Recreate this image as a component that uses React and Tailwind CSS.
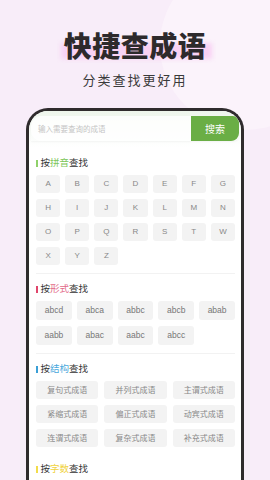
import React from 'react';

const letters = ['A','B','C','D','E','F','G','H','I','J','K','L','M','N','O','P','Q','R','S','T','W','X','Y','Z'];
const forms = ['abcd','abca','abbc','abcb','abab','aabb','abac','aabc','abcc'];
const structs = ['复句式成语','并列式成语','主谓式成语','紧缩式成语','偏正式成语','动宾式成语','连谓式成语','复杂式成语','补充式成语'];

const SectionTitle = ({ word, bar, color }) => (
    <div className="flex items-center h-[14px] text-[9.5px] text-[#333] leading-none">
        <span className={`w-[1.5px] h-[7px] mr-[3px] ${bar}`}></span>
        <span>按</span>
        <span className={color}>{word}</span>
        <span>查找</span>
    </div>
);

export default function App() {
    return (
        <div
            className="relative w-[270px] h-[480px] overflow-hidden bg-[#f8edf9]"
            style={{ fontFamily: '"Noto Sans CJK SC", "Noto Sans", sans-serif' }}
        >
            {/* soft background shapes */}
            <div className="absolute -right-[60px] -top-[40px] w-[170px] h-[170px] rounded-full bg-[#fbf3fb]"></div>

            <div className="relative flex flex-col items-center pt-[28px]">
                <div className="relative">
                    <div className="absolute left-[-3px] right-[-6px] top-[15px] h-[16px] bg-[#f8d2f4] blur-[2px]"></div>
                    <h1 className="relative text-[28px] leading-[34px] font-black text-[#2d2a2c] tracking-[0.5px]">快捷查成语</h1>
                </div>
                <p className="mt-[10px] text-[13px] leading-[16px] text-[#3a3a3a] tracking-[2px]">分类查找更好用</p>
            </div>

            <div className="relative mx-[26px] mt-[20px] h-[400px] border-[3px] border-b-0 border-[#2f2b2d] rounded-t-[22px] bg-white overflow-hidden">
                <div className="bg-gradient-to-b from-[#eef5ec] to-white pt-[5px] px-[2px] pb-[6px]">
                    <div className="flex h-[25px] rounded-r-[6px] overflow-hidden shadow-[0_1px_2px_rgba(0,0,0,0.04)]">
                        <div className="flex-1 flex items-center pl-[7px] bg-white/80 rounded-l-[10px] text-[7.5px] text-[#c4c4c4]">输入需要查询的成语</div>
                        <div className="w-[48px] flex items-center justify-center bg-[#6aae45] text-white text-[10px] rounded-br-[8px]">搜索</div>
                    </div>
                </div>

                <div className="pl-[7px] pr-[6px]">
                    <div className="mt-[9px]">
                        <SectionTitle word="拼音" bar="bg-[#8fd16a]" color="text-[#7cc65a]" />
                        <div className="grid grid-cols-7 gap-x-[5px] gap-y-[6px] mt-[5px]">
                            {letters.map(l => (
                                <div key={l} className="h-[18px] rounded-[3px] bg-[#f3f3f3] flex items-center justify-center text-[8px] text-[#888]" style={{ fontFamily: '"Liberation Sans", sans-serif' }}>{l}</div>
                            ))}
                        </div>
                    </div>
                    <div className="h-px bg-[#f2f2f2] mt-[8px]"></div>

                    <div className="mt-[8px]">
                        <SectionTitle word="形式" bar="bg-[#e0456b]" color="text-[#e26a88]" />
                        <div className="grid grid-cols-5 gap-x-[5px] gap-y-[6px] mt-[5px]">
                            {forms.map(f => (
                                <div key={f} className="h-[19px] rounded-[3px] bg-[#f3f3f3] flex items-center justify-center text-[8.5px] text-[#777]" style={{ fontFamily: '"Liberation Sans", sans-serif' }}>{f}</div>
                            ))}
                        </div>
                    </div>
                    <div className="h-px bg-[#f2f2f2] mt-[8px]"></div>

                    <div className="mt-[8px]">
                        <SectionTitle word="结构" bar="bg-[#3a9fd6]" color="text-[#4aa8dc]" />
                        <div className="grid grid-cols-3 gap-x-[6px] gap-y-[6px] mt-[5px]">
                            {structs.map(s => (
                                <div key={s} className="h-[18px] rounded-[3px] bg-[#f3f3f3] flex items-center justify-center text-[8px] text-[#888]">{s}</div>
                            ))}
                        </div>
                    </div>

                    <div className="mt-[15px]">
                        <SectionTitle word="字数" bar="bg-[#f2dc4a]" color="text-[#f0d23c]" />
                    </div>
                </div>
            </div>
        </div>
    );
}
